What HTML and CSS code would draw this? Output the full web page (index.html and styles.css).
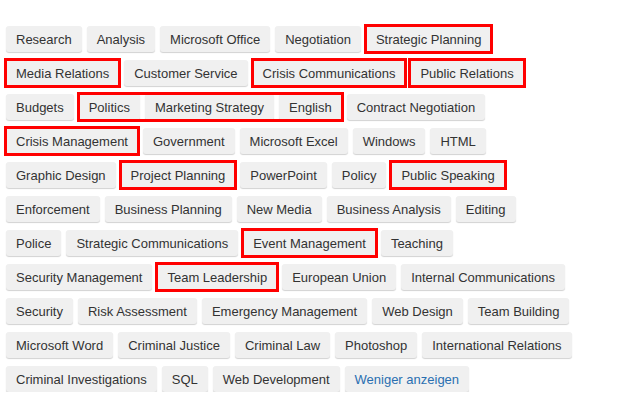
FILE: index.html
```html
<!DOCTYPE html>
<html>
<head>
  <title>Skills</title>
  <link rel="stylesheet" href="styles.css">
</head>
<body>
  <div class="skills">
    <span class="tag">Research</span>
    <span class="tag">Analysis</span>
    <span class="tag">Microsoft Office</span>
    <span class="tag">Negotiation</span>
    <span class="tag marked">Strategic Planning</span>
    <span class="tag marked">Media Relations</span>
    <span class="tag">Customer Service</span>
    <span class="tag marked">Crisis Communications</span>
    <span class="tag marked">Public Relations</span>
    <span class="tag">Budgets</span>
    <span class="group marked">
      <span class="tag">Politics</span>
      <span class="tag">Marketing Strategy</span>
      <span class="tag">English</span>
    </span>
    <span class="tag">Contract Negotiation</span>
    <span class="tag marked">Crisis Management</span>
    <span class="tag">Government</span>
    <span class="tag">Microsoft Excel</span>
    <span class="tag">Windows</span>
    <span class="tag">HTML</span>
    <span class="tag">Graphic Design</span>
    <span class="tag marked">Project Planning</span>
    <span class="tag">PowerPoint</span>
    <span class="tag">Policy</span>
    <span class="tag marked">Public Speaking</span>
    <span class="tag">Enforcement</span>
    <span class="tag">Business Planning</span>
    <span class="tag">New Media</span>
    <span class="tag">Business Analysis</span>
    <span class="tag">Editing</span>
    <span class="tag">Police</span>
    <span class="tag">Strategic Communications</span>
    <span class="tag marked">Event Management</span>
    <span class="tag">Teaching</span>
    <span class="tag">Security Management</span>
    <span class="tag marked">Team Leadership</span>
    <span class="tag">European Union</span>
    <span class="tag">Internal Communications</span>
    <span class="tag">Security</span>
    <span class="tag">Risk Assessment</span>
    <span class="tag">Emergency Management</span>
    <span class="tag">Web Design</span>
    <span class="tag">Team Building</span>
    <span class="tag">Microsoft Word</span>
    <span class="tag">Criminal Justice</span>
    <span class="tag">Criminal Law</span>
    <span class="tag">Photoshop</span>
    <span class="tag">International Relations</span>
    <span class="tag">Criminal Investigations</span>
    <span class="tag">SQL</span>
    <span class="tag">Web Development</span>
    <a class="tag more" href="#">Weniger anzeigen</a>
  </div>
</body>
</html>
```

FILE: styles.css
```css
body {
  margin: 0;
  background: #fff;
  font-family: "Liberation Sans", Arial, sans-serif;
}

.skills {
  display: flex;
  flex-wrap: wrap;
  gap: 8px 5px;
  width: 567px;
  padding: 26px 0 0 6px;
}

.tag {
  display: inline-flex;
  align-items: center;
  height: 26px;
  padding: 0 10px;
  font-size: 13px;
  color: #333;
  background-color: #f0f0f0;
  border-radius: 3px;
  box-shadow: 0 1px 1px rgba(0, 0, 0, 0.18);
  white-space: nowrap;
  text-decoration: none;
}

/* several tags inside one red frame */
.group {
  display: flex;
  gap: 5px;
}

.marked {
  outline: 3px solid #f00;
  outline-offset: -1px;
}

.tag.marked {
  border-radius: 0;
}

.more {
  color: #2a6fb0;
}
```
